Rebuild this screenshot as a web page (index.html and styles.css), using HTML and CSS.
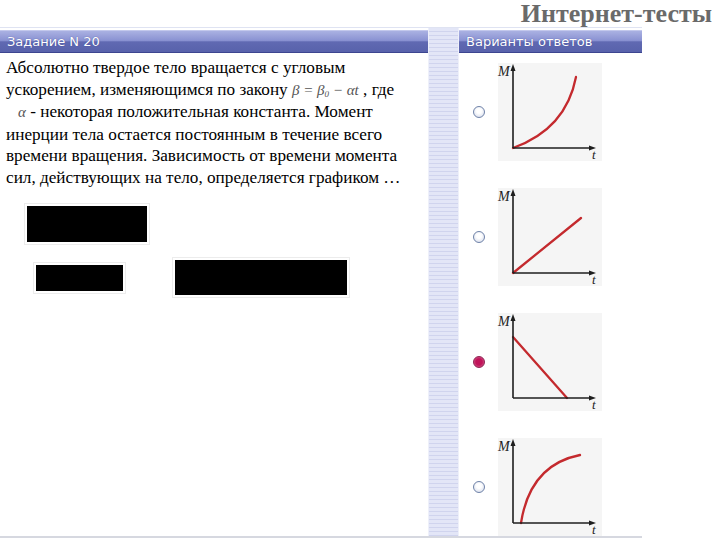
FILE: index.html
```html
<!DOCTYPE html>
<html lang="ru">
<head>
<meta charset="utf-8">
<title>Интернет-тесты</title>
<link rel="stylesheet" href="styles.css">
</head>
<body>
<header class="top">
  <h1 class="brand">Интернет-тесты</h1>
</header>
<main class="main">
  <section class="task">
    <div class="bar">Задание N 20</div>
    <p class="question">Абсолютно твердое тело вращается с угловым<br>ускорением, изменяющимся по закону <span class="formula">β = β<sub>0</sub> − αt</span> , где<br><span class="formula alpha">α</span> - некоторая положительная константа. Момент<br>инерции тела остается постоянным в течение всего<br>времени вращения. Зависимость от времени момента<br>сил, действующих на тело, определяется графиком …</p>
    <div class="redact r1"></div>
    <div class="redact-row">
      <div class="redact r2"></div>
      <div class="redact r3"></div>
    </div>
  </section>
  <div class="strip"></div>
  <section class="answers">
    <div class="bar">Варианты ответов</div>
    <ul class="options">
      <li class="option">
        <span class="radio"></span>
        <svg class="graph" viewBox="0 0 104 98" width="104" height="98">
          <rect width="104" height="98" class="bg"/>
          <path class="curve" d="M15,85 Q68,66 78,14"/>
          <line class="axis" x1="15" y1="85" x2="15" y2="6"/>
          <line class="axis" x1="15" y1="85" x2="93" y2="85"/>
          <polygon class="arrow" points="15,1 12.5,8 17.5,8"/>
          <polygon class="arrow" points="98,85 91,82.5 91,87.5"/>
          <text class="lbl" x="0" y="13">M</text>
          <text class="lbl t" x="94" y="96">t</text>
        </svg>
      </li>
      <li class="option">
        <span class="radio"></span>
        <svg class="graph" viewBox="0 0 104 98" width="104" height="98">
          <rect width="104" height="98" class="bg"/>
          <path class="curve" d="M15,85 L83,30"/>
          <line class="axis" x1="15" y1="85" x2="15" y2="6"/>
          <line class="axis" x1="15" y1="85" x2="93" y2="85"/>
          <polygon class="arrow" points="15,1 12.5,8 17.5,8"/>
          <polygon class="arrow" points="98,85 91,82.5 91,87.5"/>
          <text class="lbl" x="0" y="13">M</text>
          <text class="lbl t" x="94" y="96">t</text>
        </svg>
      </li>
      <li class="option">
        <span class="radio checked"></span>
        <svg class="graph" viewBox="0 0 104 98" width="104" height="98">
          <rect width="104" height="98" class="bg"/>
          <path class="curve" d="M15,24 L69,85"/>
          <line class="axis" x1="15" y1="85" x2="15" y2="6"/>
          <line class="axis" x1="15" y1="85" x2="93" y2="85"/>
          <polygon class="arrow" points="15,1 12.5,8 17.5,8"/>
          <polygon class="arrow" points="98,85 91,82.5 91,87.5"/>
          <text class="lbl" x="0" y="13">M</text>
          <text class="lbl t" x="94" y="96">t</text>
        </svg>
      </li>
      <li class="option">
        <span class="radio"></span>
        <svg class="graph" viewBox="0 0 104 98" width="104" height="98">
          <rect width="104" height="98" class="bg"/>
          <path class="curve" d="M23,85 Q32,27 82,17"/>
          <line class="axis" x1="15" y1="85" x2="15" y2="6"/>
          <line class="axis" x1="15" y1="85" x2="93" y2="85"/>
          <polygon class="arrow" points="15,1 12.5,8 17.5,8"/>
          <polygon class="arrow" points="98,85 91,82.5 91,87.5"/>
          <text class="lbl" x="0" y="13">M</text>
          <text class="lbl t" x="94" y="96">t</text>
        </svg>
      </li>
    </ul>
  </section>
</main>
</body>
</html>
```
FILE: styles.css
```css
* { box-sizing: border-box; }
html, body { margin: 0; padding: 0; background: #ffffff; }
body { width: 720px; height: 540px; overflow: hidden; font-family: "Liberation Serif", serif; }

.top { height: 27px; display: flex; justify-content: flex-end; align-items: flex-start; padding-right: 8px; }
.brand {
  margin: 0;
  font-family: "Liberation Serif", serif;
  font-weight: bold;
  font-size: 26px;
  line-height: 27px;
  height: 27px;
  color: #6a6a6a;
}

.main {
  width: 642px;
  height: 511px;
  display: flex;
  border-top: 1px solid #dfe3f2;
  border-bottom: 2px solid #d6d8e0;
}

.bar {
  height: 23px;
  margin-top: 2px;
  padding-left: 7px;
  font-family: "DejaVu Sans", sans-serif;
  font-size: 13px;
  line-height: 22px;
  color: #ffffff;
  text-shadow: 0 0 1px #3a4390;
  background: linear-gradient(to bottom, #aab1e2 0%, #8a92d2 45%, #6069b2 52%, #5862ab 100%);
  border-bottom: 1px solid #3c4590;
  border-top: 1px solid #c3c8ec;
  white-space: nowrap;
}

.task { width: 428px; flex: none; }
.question {
  margin: 0;
  padding: 4px 4px 0 6px;
  font-size: 17.2px;
  line-height: 21.5px;
  color: #000;
  white-space: nowrap;
}
.formula {
  font-style: italic;
  color: #555;
  font-size: 15px;
}
.formula sub { font-size: 9px; vertical-align: -2px; line-height: 0; }
.alpha { margin-left: 12px; }

.redact { background: #000; outline: 1px solid #ececec; outline-offset: 2px; }
.r1 { width: 120px; height: 36px; margin: 18px 0 0 27px; }
.redact-row { display: flex; align-items: center; margin-top: 18px; }
.r2 { width: 87px; height: 26px; margin-left: 36px; }
.r3 { width: 172px; height: 35px; margin-left: 52px; }

.strip {
  width: 31px;
  flex: none;
  background: repeating-linear-gradient(to bottom, #e3e6f7 0, #e3e6f7 3px, #d0d4ee 3px, #d0d4ee 4px);
  border-left: 1px solid #eef0fa;
  border-right: 1px solid #eef0fa;
}

.answers { width: 183px; flex: none; }
.options { list-style: none; margin: 10px 0 0 0; padding: 0; }
.option {
  display: flex;
  align-items: center;
  height: 98px;
  margin-bottom: 27px;
  padding-left: 14px;
}
.radio {
  width: 12px;
  height: 12px;
  border-radius: 50%;
  border: 1px solid #6f82a8;
  background: radial-gradient(circle at 50% 40%, #ffffff 30%, #cfd6e8 100%);
  flex: none;
}
.radio.checked {
  border-color: #8c2050;
  background: radial-gradient(circle at 50% 50%, #c0145a 45%, #e07aa0 100%);
}
.graph { display: block; margin-left: 13px; flex: none; overflow: visible; }
.graph .bg { fill: #f5f5f5; }
.graph .axis { stroke: #1e1e1e; stroke-width: 1.6; }
.graph .arrow { fill: #1e1e1e; }
.graph .curve { fill: none; stroke: #c42a2e; stroke-width: 2.3; stroke-linecap: round; }
.graph .lbl { font-family: "Liberation Serif", serif; font-style: italic; font-size: 14px; fill: #222; }
.graph .lbl.t { font-size: 13px; }
```
